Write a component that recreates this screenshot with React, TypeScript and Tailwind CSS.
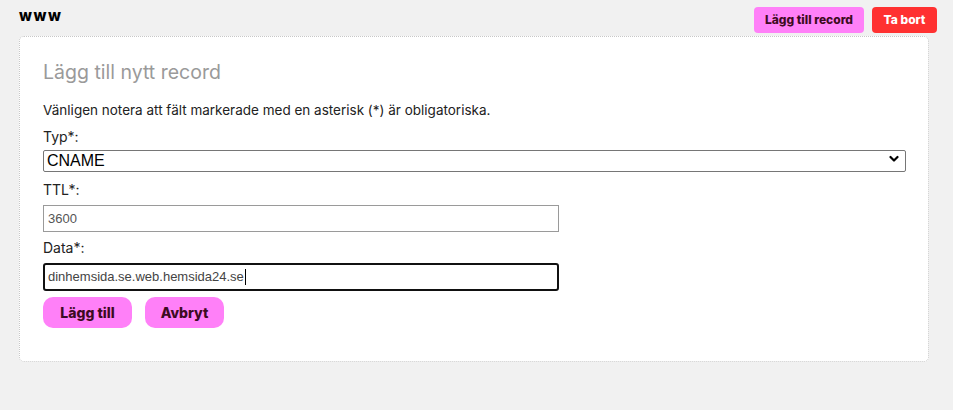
import React from 'react';

const App: React.FC = () => {
  return (
    <div className="min-h-[410px] bg-[#f1f1f1] font-['Inter','Noto_Sans',sans-serif] text-[#222]">
      <div className="flex items-start justify-between pl-[19px] pr-[16px] pt-[7px]">
        <h1 className="mt-[1px] text-[15px] font-extrabold leading-[16px] tracking-[1.5px] text-black">www</h1>
        <div className="flex gap-[8px]">
          <button className="h-[26px] w-[110px] rounded-[4px] bg-[#ff80f8] text-[12px] font-extrabold text-[#3d0b22]">
            Lägg till record
          </button>
          <button className="h-[26px] w-[65px] rounded-[4px] bg-[#ff3131] text-[12px] font-extrabold text-white">
            Ta bort
          </button>
        </div>
      </div>

      <div className="ml-[19px] mt-[3px] w-[910px] rounded-[5px] border border-dotted border-[#c8c8c8] bg-white pb-[33px] pl-[23px] pr-[22px] pt-[23px]">
        <h2 className="text-[19.5px] font-normal leading-[24px] text-[#9a9a9a]">Lägg till nytt record</h2>
        <p className="mt-[17px] text-[13.5px] leading-[18px] text-[#222]">
          Vänligen notera att fält markerade med en asterisk (*) är obligatoriska.
        </p>

        <label className="mt-[8px] block text-[14px] leading-[20px]">Typ*:</label>
        <div className="relative mt-[1px] h-[22px] w-full">
          <select
            defaultValue="CNAME"
            className="h-[22px] w-full appearance-none rounded-[2px] border border-[#767676] bg-white pl-[3px] font-['Liberation_Sans',Arial,sans-serif] text-[16px] leading-[20px] text-black outline-none"
          >
            <option>A</option>
            <option>AAAA</option>
            <option>CNAME</option>
            <option>MX</option>
            <option>TXT</option>
          </select>
          <svg
            className="pointer-events-none absolute right-[7px] top-[7px]"
            width="10"
            height="8"
            viewBox="0 0 10 8"
            fill="none"
          >
            <path d="M1.5 2L5 5.5L8.5 2" stroke="#000" strokeWidth="2.2" strokeLinecap="round" strokeLinejoin="round" />
          </svg>
        </div>

        <label className="mt-[10px] block text-[14px] leading-[20px]">TTL*:</label>
        <input
          defaultValue="3600"
          className="mt-[5px] block h-[27px] w-[516px] border border-[#9a9a9a] px-[4px] font-['Liberation_Sans',Arial,sans-serif] text-[13px] text-[#555] outline-none"
        />

        <label className="mt-[6px] block text-[14px] leading-[20px]">Data*:</label>
        <div className="mt-[5px] flex h-[28px] w-[516px] items-center rounded-[3px] border-2 border-[#111] px-[3px] font-['Liberation_Sans',Arial,sans-serif] text-[13px] text-[#444]">
          <span>dinhemsida.se.web.hemsida24.se</span>
          <span className="ml-[1px] h-[16px] w-[1px] bg-black" />
        </div>

        <div className="mt-[6px] flex gap-[13px]">
          <button className="h-[31px] w-[89px] rounded-[10px] bg-[#ff80f8] text-[14px] font-extrabold text-[#3d0b22]">
            Lägg till
          </button>
          <button className="h-[31px] w-[79px] rounded-[10px] bg-[#ff80f8] text-[14px] font-extrabold text-[#3d0b22]">
            Avbryt
          </button>
        </div>
      </div>
    </div>
  );
};

export default App;
